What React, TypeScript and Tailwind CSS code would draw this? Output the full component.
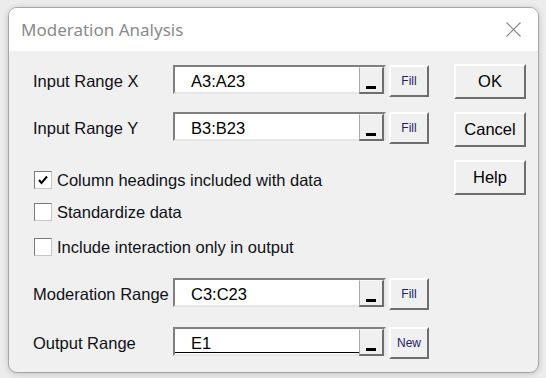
import React from "react";

const font = { fontFamily: '"Liberation Sans", Arial, sans-serif' };

function RangeBox({ value, focused }: { value: string; focused?: boolean }) {
  return (
    <div className="relative flex h-[29px] w-[213px] items-center border-2 border-t-[#7f7f7f] border-l-[#7f7f7f] border-b-[#e6e6e6] border-r-[#e6e6e6] bg-white">
      <span className="pl-[16px] pt-[4px] text-[16.5px] leading-none text-black" style={font}>{value}</span>
      {focused && <div className="absolute bottom-[1px] left-0 right-[24px] h-[1px] bg-black" />}
      <div className="absolute right-0 top-0 flex h-[27px] w-[25px] items-end justify-center border border-b-2 border-r-2 border-t-[#f8f8f8] border-l-[#a8a8a8] border-b-[#6e6e6e] border-r-[#6e6e6e] bg-[#f0f0f0] pb-[3px]">
        <div className="h-[3px] w-[10px] bg-black" />
      </div>
    </div>
  );
}

function SmallBtn({ label }: { label: string }) {
  return (
    <div className="ml-[3px] flex h-[32px] w-[40px] items-center justify-center border-2 border-t-white border-l-white border-b-[#6e6e6e] border-r-[#6e6e6e] bg-[#f0f0f0] text-[12px] leading-none text-[#1d1d6a]" style={font}>
      {label}
    </div>
  );
}

function RangeRow({ label, value, btn, focused, mt }: { label: string; value: string; btn: string; focused?: boolean; mt: string }) {
  return (
    <div className={`flex h-[32px] items-start ${mt}`}>
      <div className="flex h-[29px] w-[140px] items-center pt-[4px] text-[16.5px] leading-none text-[#101018]" style={font}>{label}</div>
      <RangeBox value={value} focused={focused} />
      <SmallBtn label={btn} />
    </div>
  );
}

function Check({ label, checked, mt }: { label: string; checked?: boolean; mt: string }) {
  return (
    <div className={`flex h-[18px] items-center ${mt}`}>
      <div className="ml-[1px] flex h-[18px] w-[18px] items-center justify-center border border-t-[#7a7a7a] border-l-[#7a7a7a] border-b-[#c8c8c8] border-r-[#c8c8c8] bg-white">
        {checked && (
          <svg width="12" height="12" viewBox="0 0 12 12">
            <path d="M2 6 L4.5 9 L10 2.5" stroke="#000" strokeWidth="2" fill="none" />
          </svg>
        )}
      </div>
      <span className="ml-[5px] text-[16.5px] leading-none text-[#101018]" style={font}>{label}</span>
    </div>
  );
}

function BigBtn({ label, mt }: { label: string; mt: string }) {
  return (
    <div className={`flex h-[35px] w-[72px] items-center justify-center border-2 border-t-white border-l-white border-b-[#6e6e6e] border-r-[#6e6e6e] bg-[#f0f0f0] text-[16.5px] leading-none text-black ${mt}`} style={font}>
      {label}
    </div>
  );
}

export default function App() {
  return (
    <div className="h-[378px] w-[546px] overflow-hidden bg-[#ececec] pl-[8px] pt-[7px]">
      <div className="flex h-[366px] w-[531px] flex-col overflow-hidden rounded-[9px] border border-[#a6a6a6] bg-[#f0f0f0] shadow-[0_1px_6px_rgba(0,0,0,0.18)]">
        <div className="flex h-[43px] shrink-0 items-center justify-between bg-white pl-[12px] pr-[17px]">
          <span className="text-[17px] text-[#8a8a8a]" style={{ fontFamily: '"Noto Sans", "Open Sans", sans-serif' }}>Moderation Analysis</span>
          <svg width="15" height="15" viewBox="0 0 15 15">
            <path d="M0.5 0.5 L14.5 14.5 M14.5 0.5 L0.5 14.5" stroke="#8a8a8a" strokeWidth="1.2" />
          </svg>
        </div>
        <div className="flex flex-1">
          <div className="flex flex-col pl-[24px]">
            <RangeRow label="Input Range X" value="A3:A23" btn="Fill" mt="mt-[14px]" />
            <RangeRow label="Input Range Y" value="B3:B23" btn="Fill" mt="mt-[15px]" />
            <Check label="Column headings included with data" checked mt="mt-[27px]" />
            <Check label="Standardize data" mt="mt-[14px]" />
            <Check label="Include interaction only in output" mt="mt-[17px]" />
            <RangeRow label="Moderation Range" value="C3:C23" btn="Fill" mt="mt-[22px]" />
            <RangeRow label="Output Range" value="E1" btn="New" focused mt="mt-[17px]" />
          </div>
          <div className="ml-[25px] flex flex-col">
            <BigBtn label="OK" mt="mt-[13px]" />
            <BigBtn label="Cancel" mt="mt-[13px]" />
            <BigBtn label="Help" mt="mt-[13px]" />
          </div>
        </div>
      </div>
    </div>
  );
}
